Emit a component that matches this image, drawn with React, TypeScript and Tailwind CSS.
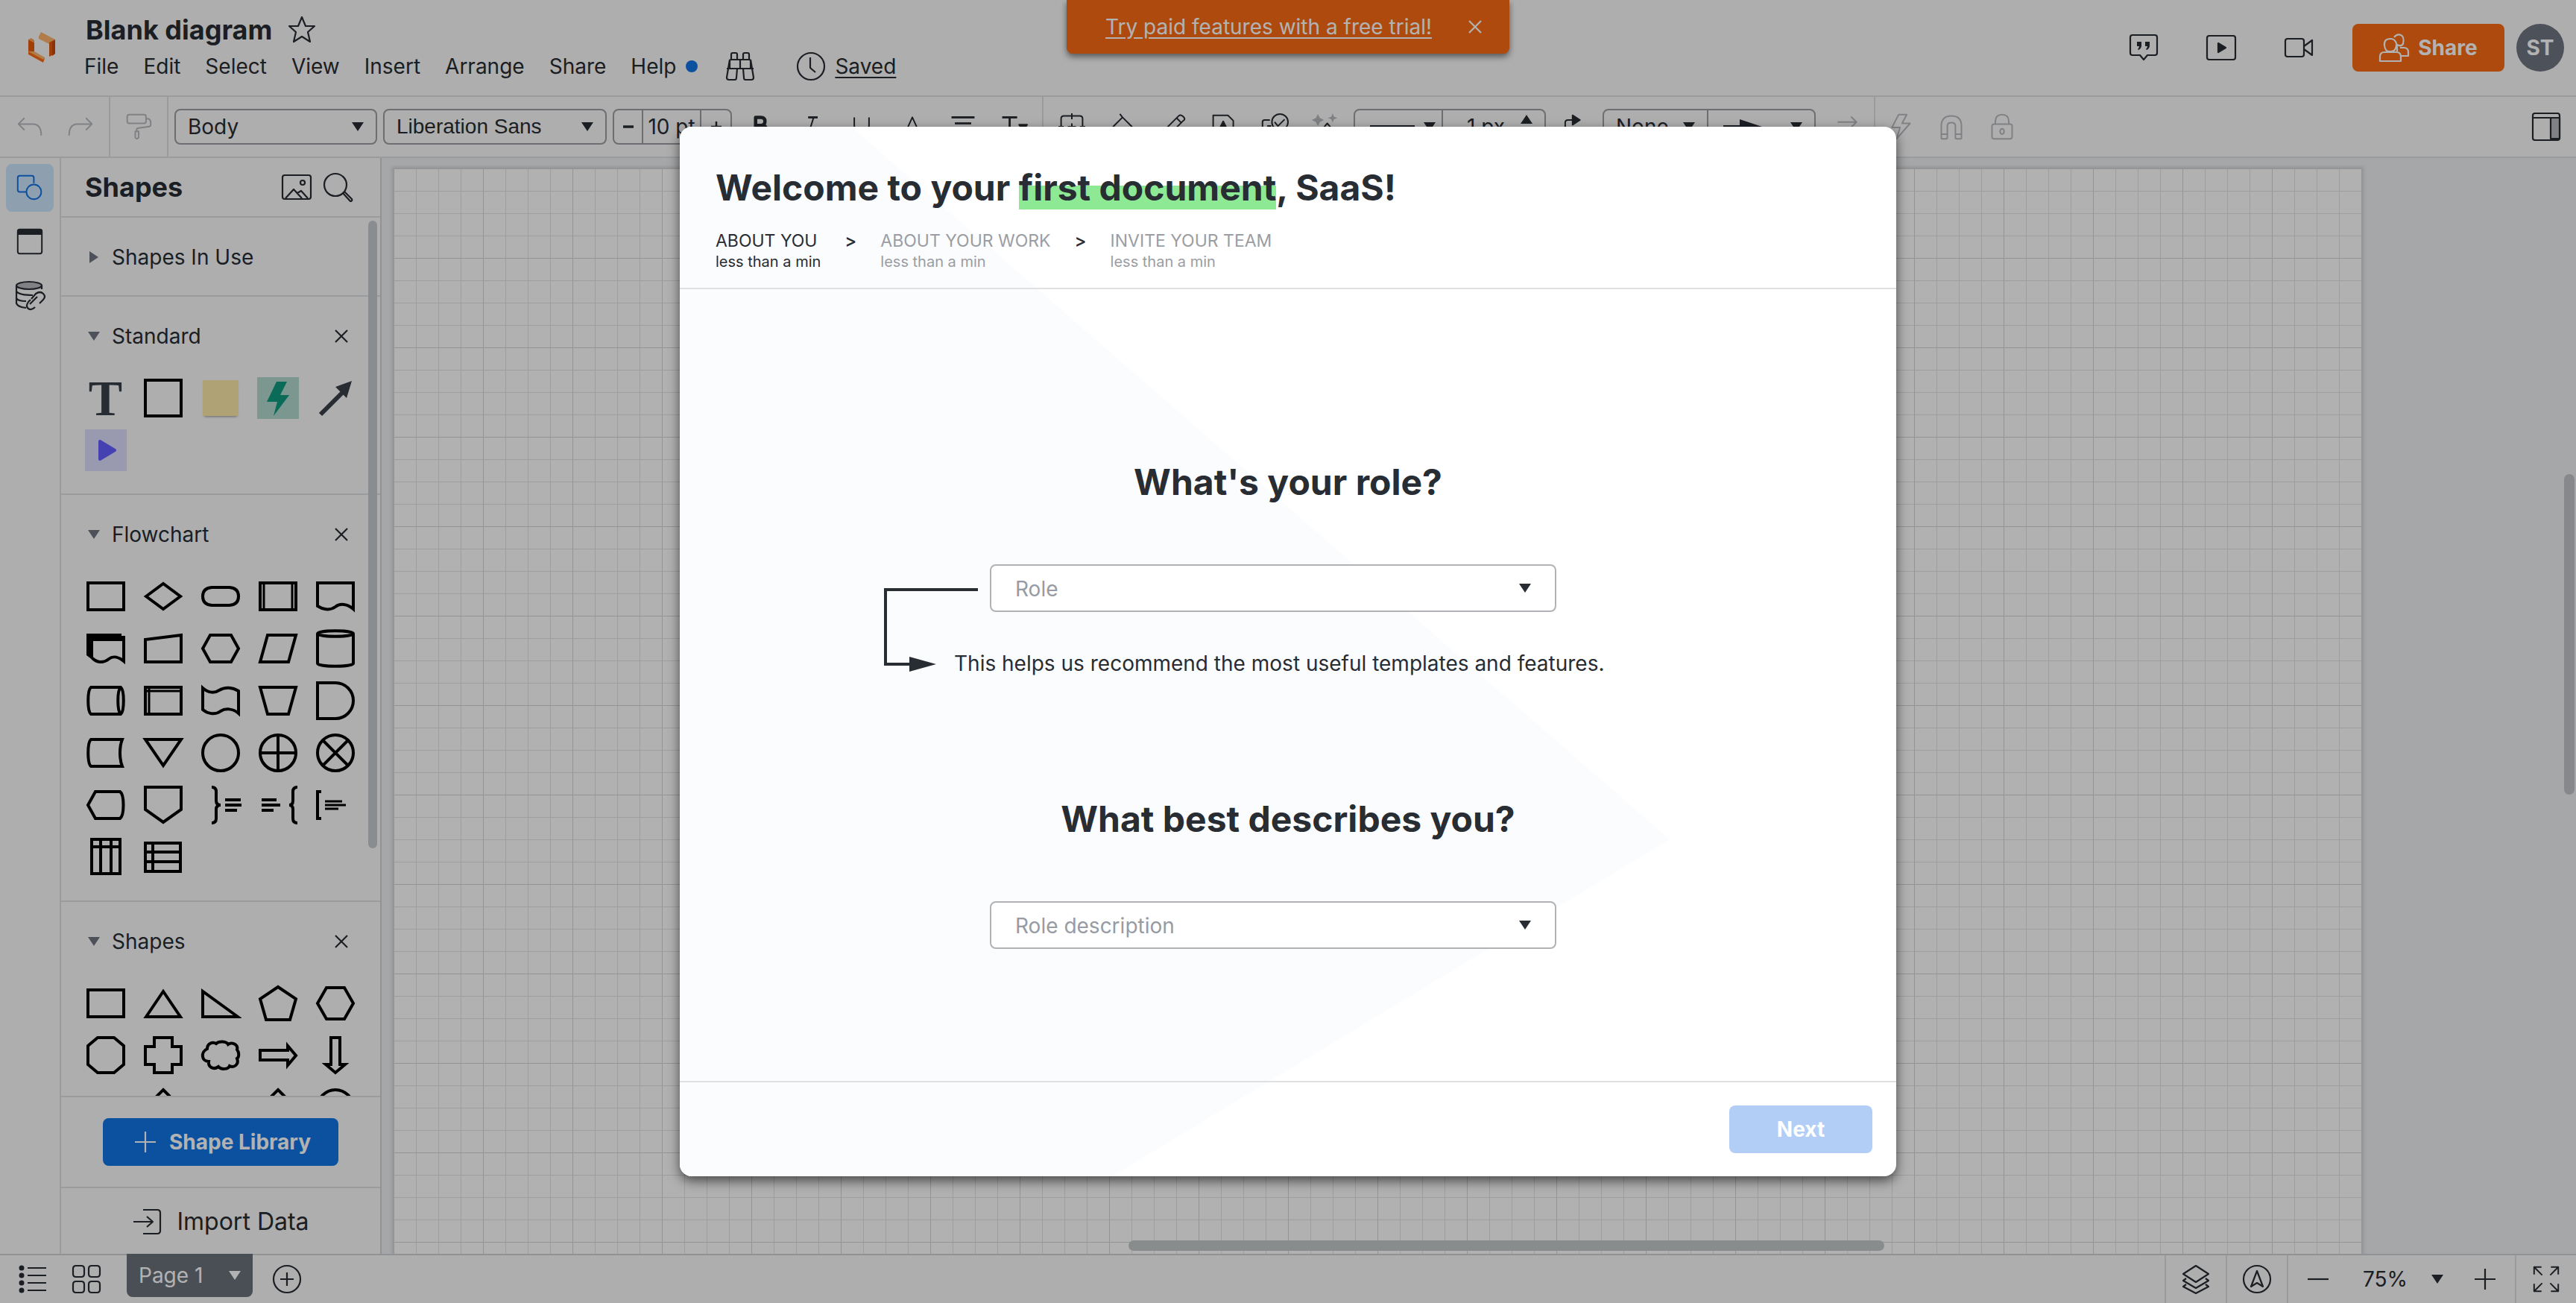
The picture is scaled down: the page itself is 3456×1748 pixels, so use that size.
import { ReactNode, useState } from "react";

const ICONS = {
  undo: "M12 7L3 16L12 25M3 16H26Q37 17 37 33",
  redo: "M28 7L37 16L28 25M37 16H14Q3 17 3 33",
  paint: "M3 5Q3 2 6 2H28Q31 2 31 5V12Q31 15 28 15H6Q3 15 3 12ZM31 8H34Q38 9 38 14V17Q38 20 34 20L20 22Q17 22 17 25V27M15 27H20V36Q17 40 15 36Z",
  bold: "M13 6H21Q27 6 27 12T21 18H13ZM13 18H23Q29 18 29 25T23 32H13Z",
  italic: "M16 6H30M10 32H22M24 6L16 32",
  underline: "M9 6V18Q9 28 20 28T31 18V6M7 35H33",
  textColor: "M10 28L20 6L30 28M14 21H26M6 35H34",
  align: "M3 6H37M8 15H32M3 24H37M8 33H32",
  textOptions: "M3 6H25M14 6V32",
  table: "M4 36V8Q4 4 8 4H32Q36 4 36 8V36M20 0V9M20 15V25M0 20H8M14 20H26M32 20H40",
  fill: "M16 1L20 6M20 6L34 20L20 34L6 20L20 6",
  pen: "M6 26L28 4Q31 1 35 5T35 11L13 33L3 36ZM25 7L32 14",
  page: "M4 3H26L34 11V36H4Z",
  check: "M13 10H5Q2 10 2 13V34H30V26M9 19H15M20 13L25 19L35 9",
  sparkle: "M17 30V22L23 15L29 22V30M20 30V24L23 21L26 24V30",
  elbow: "M11 36V14Q11 10 15 10H24",
  arrow: "M6 13H33M26 5L34 13L26 21",
  bolt: "M17 2H29L22 15H34L14 38L19 21H7Z",
  magnet: "M5 37V19Q5 4 20 4T35 19V37Q35 38 34 38H28Q26 38 26 36V19Q26 14 20 14T14 19V36Q14 38 12 38H6Q5 38 5 37ZM5 31H14M26 31H35",
  lock: "M5 19Q5 16 8 16H32Q35 16 35 19V35Q35 38 32 38H8Q5 38 5 35ZM10 16V12Q10 2 20 2T30 12V16M17 27A3 4 0 1 0 23 27A3 4 0 1 0 17 27",
  star: "M20 3L25 15H37L28 23L31 36L20 29L9 36L12 23L3 15H15Z",
  binoculars: "M8 12V4Q8 2 10 2H14Q16 2 16 4V12M24 12V4Q24 2 26 2H30Q32 2 32 4V12M6 23V13Q6 11 8 11H32Q34 11 34 13V23M20 11V23M2 23H38M6 11L2 35Q2 38 5 38H13Q15 38 15 35L16 23M34 11L38 35Q38 38 35 38H27Q25 38 25 35L24 23",
  clock: "M2 20A18 18 0 1 1 38 20A18 18 0 1 1 2 20M19 8V22L26 28",
  close: "M12 12L28 28M28 12L12 28",
  comment: "M5 3H35Q38 3 38 6V27Q38 30 35 30H25L20 36L15 30H5Q2 30 2 27V6Q2 3 5 3Z",
  present: "M4 4H36Q39 4 39 7V33Q39 36 36 36H4Q1 36 1 33V7Q1 4 4 4Z",
  video: "M5 8H24Q27 8 27 11V29Q27 32 24 32H5Q2 32 2 29V11Q2 8 5 8ZM27 18L38 10V30L27 22",
  people: "M24 25V22Q24 8 15 8T7 17T15 25Q23 25 23 16M1 38V32Q1 26 7 26H23Q29 26 29 32V38ZM20 6Q24 1 29 3T32 15Q29 19 24 16M28 20H33Q39 20 39 26V31H30",
  shapes: "M15 26H5Q2 26 2 23V5Q2 2 5 2H23Q26 2 26 5V13M15 26A11 11 0 1 1 37 26A11 11 0 1 1 15 26",
  window: "M5 2H35Q38 2 38 5V35Q38 38 35 38H5Q2 38 2 35V5Q2 2 5 2Z",
  database: "M2 7V31Q4 36 15 37M36 7V12M2 15Q6 20 24 20M2 24Q4 28 15 28M22 25L28 18Q34 14 38 18T38 26L33 31M30 22L20 32M27 36Q22 41 18 38T18 29L21 26",
  image: "M4 4H36Q39 4 39 7V33Q39 36 36 36H4Q1 36 1 33V7Q1 4 4 4ZM5 35L16 23L27 35M21 28L26 25L35 35M25 14A3 3 0 1 0 31 14A3 3 0 1 0 25 14",
  search: "M1 17A15 15 0 1 1 31 17A15 15 0 1 1 1 17M26 28L28 26L38 36Q39 38 37 39H36Z",
  plus: "M20 6V34M6 20H34",
  minus: "M6 20H34",
  importData: "M15 4H34Q38 4 38 8V32Q38 36 34 36H15M2 20H28M20 13L28 20L20 27",
  list: "M13 5H38M13 15H38M13 25H38M13 35H38",
  grid: "M6 2H13Q17 2 17 6V13Q17 17 13 17H6Q2 17 2 13V6Q2 2 6 2ZM27 2H34Q38 2 38 6V13Q38 17 34 17H27Q23 17 23 13V6Q23 2 27 2ZM6 23H13Q17 23 17 27V34Q17 38 13 38H6Q2 38 2 34V27Q2 23 6 23ZM27 23H34Q38 23 38 27V34Q38 38 34 38H27Q23 38 23 34V27Q23 23 27 23Z",
  addPage: "M2 20A18 18 0 1 1 38 20A18 18 0 1 1 2 20M20 11V29M11 20H29",
  layers: "M20 2L37 13L20 24L3 13ZM7 19L3 22L20 32L37 22L33 19M7 27L3 30L20 39L37 30L33 27",
  navigate: "M2 20A18 18 0 1 1 38 20A18 18 0 1 1 2 20M20 9L28 30L20 25L12 30Z",
  expand: "M2 13V2H13M2 2L14 14M27 2H38V13M38 2L26 14M2 27V38H13M2 38L14 26M27 38H38V27M38 38L26 26",
  panel: "M5 2H35Q38 2 38 5V35Q38 38 35 38H5Q2 38 2 35V5Q2 2 5 2ZM2 8H38",
};

const RECT = "M4 10H52V46H4Z";
const CIRCLE = "M4 28A24 24 0 1 1 52 28A24 24 0 1 1 4 28Z";

const FLOWCHART: { name: string; d: string; thin?: string; solid?: string }[] = [
  { name: "Process", d: RECT },
  { name: "Decision", d: "M5 28L28 11L51 28L28 45Z" },
  { name: "Terminator", d: "M16 16H40Q52 17 52 28T40 40H16Q4 39 4 28T16 16Z" },
  { name: "Predefined process", d: RECT, thin: "M9 10V46M47 10V46" },
  { name: "Document", d: "M4 10H52V45C44 38 34 37 28 42C20 48 10 45 4 41Z" },
  {
    name: "Multiple documents",
    d: "M10 16H52V45C46 40 38 37 32 42C26 47 17 48 10 41",
    solid: "M2 8H49V11H54V18H11V44L2 37Z",
  },
  { name: "Manual input", d: "M4 16L52 10V46H4Z" },
  { name: "Preparation", d: "M4 28L14 10H42L52 28L42 46H14Z" },
  { name: "Data", d: "M14 10H52L42 46H4Z" },
  { name: "Database", d: "M4 8C4 3 52 3 52 8S4 13 4 8V48C4 53 52 53 52 48V8" },
  {
    name: "Direct access storage",
    d: "M8 10H48C53 14 53 42 48 46H8C3 42 3 14 8 10ZM48 10C43 14 43 42 48 46",
  },
  { name: "Internal storage", d: RECT, thin: "M9 10V46M4 15H52" },
  {
    name: "Paper tape",
    d: "M4 11C12 18 20 18 26 14C34 9 44 10 52 15V45C44 38 34 38 28 42C20 48 10 45 4 40Z",
  },
  { name: "Manual operation", d: "M4 10H52L42 46H14Z" },
  { name: "Delay", d: "M4 4H28A24 24 0 0 1 28 52H4Z" },
  { name: "Stored data", d: "M8 10H50C46 20 46 36 50 46H8C3 42 3 14 8 10Z" },
  { name: "Merge", d: "M4 10H52L28 45Z" },
  { name: "Connector", d: CIRCLE },
  { name: "Or", d: CIRCLE + "M28 4V52M4 28H52" },
  { name: "Summing junction", d: CIRCLE + "M11 11L45 45M45 11L11 45" },
  { name: "Display", d: "M4 28L14 10H47C53 14 53 42 47 46H14Z" },
  { name: "Off-page link", d: "M4 4H52V34L28 51L4 34Z" },
  {
    name: "Brace note right",
    d: "M16 4Q22 4 22 10V22Q22 28 28 28Q22 28 22 34V46Q22 52 16 52M34 21H55M34 28H56M34 35H50",
  },
  {
    name: "Brace note left",
    d: "M54 4Q48 4 48 10V22Q48 28 43 28Q48 28 48 34V46Q48 52 54 52M6 21H26M6 28H31M6 35H22",
  },
  { name: "Bracket note", d: "M9 10H4V46H9", thin: "M14 23H37M14 28H42M14 33H32" },
  { name: "Swimlane columns", d: "M9 4H47V50H9ZM9 14H47M21 4V50M35 4V50" },
  { name: "Swimlane rows", d: "M4 9H51V47H4ZM14 9V47M4 21H51M4 34H51" },
];

const BASIC_SHAPES = [
  { name: "Rectangle", d: RECT },
  { name: "Triangle", d: "M5 46L28 12L51 46Z" },
  { name: "Right triangle", d: "M4 12V46H51Z" },
  { name: "Pentagon", d: "M28 6L52 22L44 50H12L4 22Z" },
  { name: "Hexagon", d: "M4 28L16 7H40L52 28L40 49H16Z" },
  { name: "Octagon", d: "M17 4H39L52 15V40L39 51H17L4 40V15Z" },
  { name: "Cross", d: "M16 4H40V16H52V40H40V51H16V40H4V16H16Z" },
  {
    name: "Cloud",
    d: "M10 19C10 12 17 9 22 12C26 8 36 9 38 13C44 9 52 14 50 20C53 24 53 30 50 32C53 40 46 45 40 42C38 47 28 47 25 43C18 48 11 43 12 36C2 36 1 23 10 19Z",
  },
  { name: "Arrow right", d: "M4 21H41V15L52 28L41 41V34H4Z" },
  { name: "Arrow down", d: "M22 4H34V40H41L28 51L15 40H22Z" },
  { name: "Star", d: "M16 20L22 28L28 48L8 42Z" },
  { name: "Diamond", d: "M28 4L52 28L28 52L4 28Z" },
  { name: "Burst", d: "M16 19L28 28L40 19L44 46H12Z" },
  { name: "Rhombus", d: "M28 4L52 28L28 52L4 28Z" },
  { name: "Circle", d: CIRCLE },
];

const MENUS = ["File", "Edit", "Select", "View", "Insert", "Arrange", "Share", "Help"];

const STEPS = ["ABOUT YOU", "ABOUT YOUR WORK", "INVITE YOUR TEAM"];

type IconProps = { name: keyof typeof ICONS; className?: string; children?: ReactNode };

function Icon({ name, className = "size-10", children }: IconProps) {
  return (
    <svg
      viewBox="0 0 40 40"
      className={`shrink-0 overflow-visible ${className}`}
      fill="none"
      stroke="currentColor"
      strokeWidth="2.2"
      strokeLinejoin="round"
      aria-hidden="true"
    >
      <path d={ICONS[name]} />
      {children}
    </svg>
  );
}

function Caret({ className = "" }: { className?: string }) {
  return (
    <svg viewBox="0 0 16 12" className={`h-3 w-4 shrink-0 ${className}`} aria-hidden="true">
      <path d="M0 0H16L8 12Z" fill="currentColor" />
    </svg>
  );
}

function ShapeButton({ shape }: { shape: { name: string; d: string; thin?: string; solid?: string } }) {
  return (
    <button aria-label={shape.name} className="flex h-[70px] items-center justify-center text-black">
      <svg viewBox="0 0 56 56" className="size-14" fill="none" stroke="currentColor" strokeWidth="4">
        <path d={shape.d} />
        {shape.thin && <path d={shape.thin} strokeWidth="3" />}
        {shape.solid && <path d={shape.solid} fill="currentColor" stroke="none" />}
      </svg>
    </button>
  );
}

function ToolButton({ name, label, muted, children }: { name: keyof typeof ICONS; label: string; muted?: boolean; children?: ReactNode }) {
  return (
    <button
      aria-label={label}
      className={`flex h-20 w-[68px] shrink-0 items-center justify-center ${muted ? "text-[#b6b9bd]" : ""}`}
    >
      <Icon name={name} className="size-9">
        {children}
      </Icon>
    </button>
  );
}

function Section({ title, open = true, children }: { title: string; open?: boolean; children?: ReactNode }) {
  return (
    <section className="border-b-2 border-[#dcdee0]">
      <div className="flex h-[104px] items-center pt-px pr-8 pl-9">
        <button className="flex flex-1 items-center gap-4 text-left" aria-expanded={open}>
          <Caret className={open ? "text-[#6f7681]" : "-rotate-90 text-[#6f7681]"} />
          <span>{title}</span>
        </button>
        {open && (
          <button aria-label={`Close ${title}`}>
            <Icon name="close" />
          </button>
        )}
      </div>
      {children && <div className="-mt-[3px] ml-[21px] grid w-[385px] grid-cols-5 pb-[23px]">{children}</div>}
    </section>
  );
}

function Header() {
  return (
    <header className="flex h-[130px] shrink-0 border-b-2 border-[#dcdee0] bg-[#fafafa]">
      <a href="#" aria-label="Home" className="flex w-[113px] items-center pl-9">
        <svg viewBox="0 0 40 44" className="h-11 w-10">
          <path d="M2 11L10 15V30L2 26Z" fill="#e8590c" />
          <path d="M2 11L6 9L10 12V15Z" fill="#f7a35c" />
          <path d="M2 26L8 27L24 36L22 42L2 31Z" fill="#f96b13" />
          <path d="M2 27L10 27L24 35L22 38Z" fill="#fcb26b" />
          <path d="M16 7L19 1L38 11V14L30 17L16 10Z" fill="#fcb26b" />
          <path d="M16 8L30 15V34L38 30V11L30 15Z" fill="#e8590c" />
          <path d="M34 14L38 12V30L34 33Z" fill="#c9480a" />
        </svg>
      </a>
      <div className="flex flex-1 flex-col py-4">
        <div className="flex h-12 items-center gap-5 pl-[2px]">
          <h1 className="text-4xl font-bold">Blank diagram</h1>
          <button aria-label="Favorite">
            <Icon name="star" />
          </button>
        </div>
        <nav className="flex h-12 items-center gap-[33px] pt-[2px]">
          {MENUS.map((menu) => (
            <button key={menu}>{menu}</button>
          ))}
          <span className="-ml-5 size-4 rounded-full bg-[#1273e6]" />
          <button aria-label="Find features" className="ml-1">
            <Icon name="binoculars" />
          </button>
          <a href="#" className="ml-[22px] flex items-center gap-3 underline underline-offset-4">
            <Icon name="clock" />
            Saved
          </a>
        </nav>
      </div>
      <div className="flex h-32 items-center pr-4">
        <button aria-label="Comments" className="mr-16">
          <Icon name="comment">
            <path
              d="M11 12H17V17Q17 21 13 23L12 22Q14 20 14 18H11ZM22 12H28V17Q28 21 24 23L23 22Q25 20 25 18H22Z"
              fill="currentColor"
              stroke="none"
            />
          </Icon>
        </button>
        <button aria-label="Present" className="mr-16">
          <Icon name="present">
            <path d="M16 14L26 20L16 26Z" fill="currentColor" />
          </Icon>
        </button>
        <button aria-label="Video call" className="mr-[52px]">
          <Icon name="video" />
        </button>
        <button className="mr-4 flex h-16 w-[204px] items-center justify-center gap-3 rounded-lg bg-[#f96b13] font-bold text-white">
          <Icon name="people" />
          Share
        </button>
        <button className="size-16 rounded-full bg-[#6f7681] font-bold text-white">ST</button>
      </div>
    </header>
  );
}

function Toolbar() {
  return (
    <div className="flex h-[82px] shrink-0 items-center border-b-2 border-[#dcdee0] bg-[#fafafa]">
      <div className="flex h-full w-[148px] shrink-0 items-center border-r-2 border-[#dcdee0] pl-[6px]">
        <ToolButton name="undo" label="Undo" muted />
        <ToolButton name="redo" label="Redo" muted />
      </div>
      <div className="flex h-full w-[78px] shrink-0 items-center justify-center border-r-2 border-[#dcdee0]">
        <ToolButton name="paint" label="Copy style" muted />
      </div>
      <div className="flex shrink-0 gap-2 px-2">
        <div className="relative">
          <select aria-label="Text style" className="h-12 w-[272px] appearance-none rounded-lg border-2 border-[#9b9ea2] px-4">
            <option>Body</option>
          </select>
          <Caret className="pointer-events-none absolute top-[18px] right-[18px]" />
        </div>
        <div className="relative">
          <select
            aria-label="Font"
            className="h-12 w-[300px] appearance-none rounded-lg border-2 border-[#9b9ea2] px-4 font-['Liberation_Sans',sans-serif]"
          >
            <option>Liberation Sans</option>
          </select>
          <Caret className="pointer-events-none absolute top-[18px] right-[18px]" />
        </div>
        <div className="flex h-12 w-40 divide-x-2 divide-[#9b9ea2] rounded-lg border-2 border-[#9b9ea2]">
          <button aria-label="Decrease font size" className="flex w-10 items-center justify-center">
            <Icon name="minus" className="size-5">
              <path d="M6 20H34" strokeWidth="7" />
            </Icon>
          </button>
          <input aria-label="Font size" defaultValue="10 pt" className="w-[78px] text-center" />
          <button aria-label="Increase font size" className="flex w-10 items-center justify-center">
            <Icon name="plus" className="size-5">
              <path d="M20 6V34M6 20H34" strokeWidth="5" />
            </Icon>
          </button>
        </div>
      </div>
      <div className="-ml-1 flex h-full w-[414px] shrink-0 items-center border-r-2 border-[#dcdee0]">
        <ToolButton name="bold" label="Bold">
          <path d={ICONS.bold} strokeWidth="5" />
        </ToolButton>
        <ToolButton name="italic" label="Italic">
          <path d="M16 6H30" strokeWidth="3" />
        </ToolButton>
        <ToolButton name="underline" label="Underline" />
        <ToolButton name="textColor" label="Text color" />
        <ToolButton name="align" label="Alignment">
          <path d={ICONS.align} strokeWidth="3" />
        </ToolButton>
        <ToolButton name="textOptions" label="Text options">
          <path d={ICONS.textOptions} strokeWidth="3" />
          <path d="M28 17H40L34 25Z" fill="currentColor" />
        </ToolButton>
      </div>
      <div className="flex shrink-0 items-center px-1">
        <ToolButton name="table" label="Table" />
        <ToolButton name="fill" label="Fill color" />
        <ToolButton name="pen" label="Line color" />
        <ToolButton name="page" label="Conditional formatting">
          <path d="M12 26L19 12L26 26Z" fill="currentColor" />
        </ToolButton>
        <ToolButton name="check" label="Tasks">
          <circle cx="28" cy="13" r="12" />
        </ToolButton>
        <ToolButton name="sparkle" label="Smart style">
          <path
            d="M9 1L12 7L18 10L12 13L9 19L6 13L0 10L6 7ZM31 0L33 5L38 7L33 9L31 14L29 9L24 7L29 5Z"
            fill="#b6b9bd"
            stroke="none"
          />
        </ToolButton>
      </div>
      <div className="flex h-12 shrink-0 divide-x-2 divide-[#9b9ea2] rounded-lg border-2 border-[#9b9ea2]">
        <button aria-label="Line style" className="flex w-[118px] items-center justify-between pr-2 pl-5">
          <span className="h-1 w-[60px] bg-[#282c33]" />
          <Caret />
        </button>
        <div className="flex w-[136px] items-center">
          <input aria-label="Line width" defaultValue="1 px" className="w-[104px] pl-8" />
          <button aria-label="Line width up" className="-mt-5">
            <Caret className="rotate-180" />
          </button>
        </div>
      </div>
      <ToolButton name="elbow" label="Line shape">
        <path d="M22 3L33 10L22 17Z" fill="currentColor" />
      </ToolButton>
      <div className="ml-2 flex h-12 shrink-0 divide-x-2 divide-[#9b9ea2] rounded-lg border-2 border-[#9b9ea2]">
        <div className="relative">
          <select aria-label="Line start" className="h-11 w-[138px] appearance-none pl-4">
            <option>None</option>
          </select>
          <Caret className="pointer-events-none absolute top-4 right-4" />
        </div>
        <button aria-label="Line end" className="flex w-[142px] items-center justify-between pr-4 pl-5">
          <svg viewBox="0 0 52 24" className="h-6 w-[52px]">
            <path d="M0 10H22V2L52 12L22 22V14H0Z" fill="currentColor" />
          </svg>
          <Caret />
        </button>
      </div>
      <div className="flex h-full w-[80px] shrink-0 items-center border-r-2 border-[#dcdee0] pl-2">
        <ToolButton name="arrow" label="Swap ends" muted />
      </div>
      <div className="flex flex-1 items-center">
        <ToolButton name="bolt" label="Actions" muted />
        <ToolButton name="magnet" label="Snap" muted />
        <ToolButton name="lock" label="Lock" muted />
      </div>
      <button aria-label="Toggle panel" className="mr-5">
        <Icon name="panel">
          <path d="M26 8H38V36H26Z" fill="#b6b9bd" />
        </Icon>
      </button>
    </div>
  );
}

function ShapesPanel() {
  return (
    <aside className="flex w-[430px] shrink-0 flex-col border-r-2 border-[#d0d2d5] bg-[#fafafa]">
      <div className="flex h-20 shrink-0 items-center border-b-2 border-[#dcdee0] pr-9 pl-8">
        <h2 className="flex-1 text-4xl font-bold">Shapes</h2>
        <button aria-label="Images" className="mr-4">
          <Icon name="image" />
        </button>
        <button aria-label="Search shapes">
          <Icon name="search" />
        </button>
      </div>
      <div className="relative min-h-0 flex-1 overflow-hidden">
        <Section title="Shapes In Use" open={false} />
        <Section title="Standard">
          <button className="h-[70px] font-['Liberation_Serif',serif] text-[68px] leading-[70px] font-bold text-[#3a414a]">
            T
          </button>
          <button aria-label="Block" className="flex h-[70px] items-center justify-center">
            <span className="size-[52px] border-4 border-black" />
          </button>
          <button aria-label="Note" className="flex h-[70px] items-center justify-center">
            <span className="size-12 bg-[#fbe9a8] shadow-[0_3px_3px_-2px_rgba(0,0,0,0.4)]" />
          </button>
          <button aria-label="Dynamic shape" className="flex h-[70px] items-center justify-center">
            <svg viewBox="0 0 56 56" className="size-14 bg-[#b0d8ce]">
              <path d="M26 6H40L31 24H43L22 52L27 33H13Z" fill="#0f9a80" />
            </svg>
          </button>
          <button aria-label="Line" className="flex h-[70px] items-center justify-center">
            <svg viewBox="0 0 56 56" className="size-14 text-[#3a414a]">
              <path d="M8 50L40 18" stroke="currentColor" strokeWidth="6" />
              <path d="M50 5L43 28L28 13Z" fill="currentColor" />
            </svg>
          </button>
          <button aria-label="Presentation" className="flex h-[70px] items-center justify-center">
            <svg viewBox="0 0 56 56" className="size-14 bg-[#dcdcfc]">
              <path d="M20 16L40 28L20 40Z" fill="#635dff" stroke="#635dff" strokeWidth="4" strokeLinejoin="round" />
            </svg>
          </button>
        </Section>
        <Section title="Flowchart">
          {FLOWCHART.map((shape) => (
            <ShapeButton key={shape.name} shape={shape} />
          ))}
        </Section>
        <Section title="Shapes">
          {BASIC_SHAPES.map((shape) => (
            <ShapeButton key={shape.name} shape={shape} />
          ))}
        </Section>
        <div className="absolute top-1 right-1 h-[842px] w-3 rounded-full bg-[#c5c9cf]" />
      </div>
      <div className="flex h-[124px] shrink-0 items-center justify-center border-y-2 border-[#dcdee0]">
        <button className="flex h-16 w-[316px] items-center justify-center gap-3 rounded-lg bg-[#1273e6] font-bold text-white">
          <Icon name="plus" />
          Shape Library
        </button>
      </div>
      <button className="flex h-[88px] shrink-0 items-center justify-center gap-5 pt-[2px] text-[32px]">
        <Icon name="importData" />
        Import Data
      </button>
    </aside>
  );
}

function Canvas() {
  return (
    <main className="relative flex min-w-0 flex-1 overflow-hidden bg-[#eceff2] pt-[14px] pr-[287px] pl-4">
      <div className="flex-1 bg-[#fefefe] bg-[linear-gradient(to_right,#d4d4d4_1px,transparent_1px),linear-gradient(to_bottom,#d4d4d4_1px,transparent_1px),linear-gradient(to_right,#e3e3e3_1px,transparent_1px),linear-gradient(to_bottom,#e3e3e3_1px,transparent_1px)] bg-size-[120px_120px,120px_120px,30px_30px,30px_30px] shadow-[0_0_4px_2px_#cfd2d6]" />
      <div className="absolute bottom-1 left-[1002px] h-[14px] w-[1014px] rounded-full bg-[#c5c9cb]" />
      <div className="absolute top-[424px] right-[2px] h-[430px] w-[14px] rounded-full bg-[#c0c3c7]" />
    </main>
  );
}

function StatusBar() {
  return (
    <footer className="flex h-[66px] shrink-0 items-stretch border-t-2 border-[#d0d2d5] bg-[#fafafa]">
      <button aria-label="Outline" className="ml-6">
        <Icon name="list">
          <path d="M5 5H5M5 15H5M5 25H5M5 35H5" strokeWidth="7" strokeLinecap="round" />
        </Icon>
      </button>
      <button aria-label="Page thumbnails" className="ml-8">
        <Icon name="grid" />
      </button>
      <button className="-mt-[2px] ml-[34px] flex h-[58px] w-[169px] items-center justify-between rounded-b-lg bg-[#6b727c] px-4 text-white">
        Page 1
        <Caret />
      </button>
      <button aria-label="Add page" className="ml-[26px]">
        <Icon name="addPage" />
      </button>
      <div className="flex-1" />
      <button aria-label="Layers" className="flex w-[82px] items-center justify-center border-l-2 border-[#dcdee0]">
        <Icon name="layers" />
      </button>
      <button aria-label="Navigate" className="flex w-[82px] items-center justify-center border-l-2 border-[#dcdee0]">
        <Icon name="navigate" />
      </button>
      <div className="flex w-[306px] items-center justify-between border-l-2 border-[#dcdee0] px-5">
        <button aria-label="Zoom out">
          <Icon name="minus" />
        </button>
        <button className="flex items-center gap-8 pl-1">
          75%
          <Caret />
        </button>
        <button aria-label="Zoom in">
          <Icon name="plus" />
        </button>
      </div>
      <button aria-label="Full screen" className="flex w-[82px] items-center justify-center border-l-2 border-[#dcdee0]">
        <Icon name="expand" className="size-9" />
      </button>
    </footer>
  );
}

function RoleSelect({ id, placeholder }: { id: string; placeholder: string }) {
  const [value, setValue] = useState("");

  return (
    <div className="relative w-[760px]">
      <select
        id={id}
        value={value}
        onChange={(e) => setValue(e.target.value)}
        className="h-16 w-full appearance-none rounded-lg border-2 border-[#b0b2b5] bg-white px-8 pt-[2px] text-[#979ba3]"
      >
        <option value="">{placeholder}</option>
      </select>
      <Caret className="pointer-events-none absolute top-[26px] right-[34px]" />
    </div>
  );
}

function WelcomeDialog() {
  return (
    <div
      role="dialog"
      aria-labelledby="welcome-title"
      className="relative w-[1632px] overflow-hidden rounded-2xl bg-white shadow-[0_6px_16px_rgba(0,0,0,0.6)]"
    >
      <div className="absolute inset-0 bg-[#fbfcfe] [clip-path:polygon(0_0,230px_0,1328px_956px,580px_100%,0_100%)]" />
      <div className="relative">
        <div className="h-[218px] border-b-2 border-[#dfe0e2] px-12 pt-12">
          <h2 id="welcome-title" className="text-5xl leading-[68px] font-bold">
            Welcome to your{" "}
            <span className="bg-[linear-gradient(transparent_46%,#8de993_46%)]">first document</span>, SaaS!
          </h2>
          <ol className="mt-[21px] flex">
            {STEPS.map((step, i) => (
              <li key={step} className={i === 0 ? "flex" : "flex text-[#9a9da2]"}>
                {i > 0 && <span className="w-20 text-center text-2xl leading-8 font-medium text-[#282c33]">&gt;</span>}
                <div>
                  <p className="text-[23px] leading-8">{step}</p>
                  <p className="text-xl leading-6">less than a min</p>
                </div>
              </li>
            ))}
          </ol>
        </div>
        <div className="flex flex-col items-center pt-[225px] pb-[177px]">
          <label htmlFor="role" className="text-5xl leading-[68px] font-bold">
            What's your role?
          </label>
          <div className="relative mt-[76px] w-[800px]">
            <RoleSelect id="role" placeholder="Role" />
            <svg viewBox="0 0 128 120" className="absolute top-7 -left-36 h-[120px] w-32" fill="none">
              <path d="M128 6H4V106H40" stroke="currentColor" strokeWidth="4" />
              <path d="M36 96L72 106L36 116Z" fill="currentColor" />
            </svg>
            <p className="mt-[49px] -ml-12 leading-10 whitespace-nowrap">
              This helps us recommend the most useful templates and features.
            </p>
          </div>
          <label htmlFor="role-description" className="mt-[155px] text-5xl leading-[68px] font-bold">
            What best describes you?
          </label>
          <div className="mt-[76px] w-[800px]">
            <RoleSelect id="role-description" placeholder="Role description" />
          </div>
        </div>
        <div className="flex justify-end border-t-2 border-[#dfe0e2] px-8 py-[31px]">
          <button disabled className="h-16 w-48 rounded-lg bg-[#b2cef7] font-bold text-white">
            Next
          </button>
        </div>
      </div>
    </div>
  );
}

export default function App() {
  return (
    <div className="relative flex h-screen flex-col overflow-hidden font-['Inter',sans-serif] text-[28px] leading-9 text-[#282c33]">
      <Header />
      <Toolbar />
      <div className="flex min-h-0 flex-1">
        <div className="flex w-[82px] shrink-0 flex-col items-center border-r-2 border-[#dcdee0] bg-[#fafafa] pt-2">
          <button aria-label="Shapes" className="flex size-16 items-center justify-center rounded-lg bg-[#cce4fc] text-[#1273e6]">
            <Icon name="shapes" className="size-9" />
          </button>
          <button aria-label="Templates" className="mt-[22px]">
            <Icon name="window" className="size-9">
              <path d="M3 3H37V9H3Z" fill="currentColor" />
            </Icon>
          </button>
          <button aria-label="Linked data" className="mt-[34px]">
            <Icon name="database">
              <ellipse cx="19" cy="7" rx="17" ry="5" fill="#b6b9bd" />
            </Icon>
          </button>
        </div>
        <ShapesPanel />
        <Canvas />
      </div>
      <StatusBar />

      <div className="absolute inset-x-0 top-0 flex justify-center">
        <div className="flex h-[72px] items-center gap-[38px] rounded-b-lg bg-[#f96b13] px-[52px] pr-[26px] text-white shadow-[0_4px_8px_rgba(0,0,0,0.5)]">
          <a href="#" className="underline underline-offset-4">
            Try paid features with a free trial!
          </a>
          <button aria-label="Dismiss">
            <Icon name="close" />
          </button>
        </div>
      </div>

      <div className="absolute inset-0 flex items-center justify-center bg-black/30">
        <WelcomeDialog />
      </div>
    </div>
  );
}
